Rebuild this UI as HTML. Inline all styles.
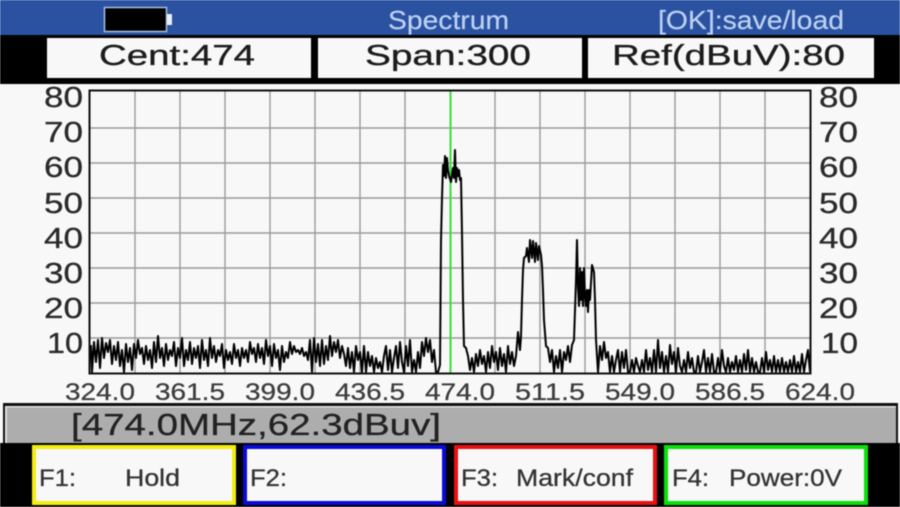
<!DOCTYPE html>
<html><head><meta charset="utf-8"><title>Spectrum</title>
<style>
html,body{margin:0;padding:0;width:900px;height:507px;overflow:hidden;background:#f8f8f8}
svg{display:block;filter:blur(.55px)}
text{font-family:"Liberation Sans",sans-serif}
.h{font-size:26px;fill:#bcd0f2;stroke:#bcd0f2;stroke-width:.2px}
.t{font-size:29px;fill:#1c1c1c;stroke:#1c1c1c;stroke-width:.35px}
.a{font-size:29px;fill:#2a2a2a;stroke:#2a2a2a;stroke-width:.3px}
.x{font-size:24px;fill:#3c3c3c;stroke:#3c3c3c;stroke-width:.25px}
.f{font-size:24px;fill:#333;stroke:#333;stroke-width:.3px}
</style></head><body>
<svg width="900" height="507" viewBox="0 0 900 507" xmlns="http://www.w3.org/2000/svg">
<rect width="900" height="507" fill="#f8f8f8"/>
<rect width="900" height="35" fill="#2a52a0"/>
<rect y="35" width="900" height="49" fill="#000"/>
<rect x="104.500" y="7.500" width="62" height="24" fill="#000" stroke="#a8bfe8" stroke-width="1.500"/>
<rect x="167" y="14" width="5" height="11" fill="#e8eefa"/>
<text class="h" x="388" y="29" textLength="121" lengthAdjust="spacingAndGlyphs">Spectrum</text>
<text class="h" x="658" y="29" textLength="186" lengthAdjust="spacingAndGlyphs">[OK]:save/load</text>
<rect x="47" y="38" width="264" height="40" fill="#f8f8f8"/>
<rect x="318" y="38" width="264" height="40" fill="#f8f8f8"/>
<rect x="588" y="38" width="286" height="40" fill="#f8f8f8"/>
<text class="t" x="99" y="65" textLength="156" lengthAdjust="spacingAndGlyphs">Cent:474</text>
<text class="t" x="365" y="65" textLength="166" lengthAdjust="spacingAndGlyphs">Span:300</text>
<text class="t" x="612" y="65" textLength="233" lengthAdjust="spacingAndGlyphs">Ref(dBuV):80</text>

<g stroke="#9a9a9a" stroke-width="1.400" fill="none">
<path d="M135 91V374M180 91V374M225 91V374M270 91V374M315 91V374M360 91V374M405 91V374M495 91V374M540 91V374M585 91V374M630 91V374M675 91V374M720 91V374M765 91V374"/>
<path d="M89 128H811M89 163H811M89 198H811M89 233H811M89 268H811M89 303H811M89 338H811"/>
</g>
<path d="M450.500 91V374" stroke="#38e038" stroke-width="2" fill="none"/>
<polyline fill="none" stroke="#000" stroke-width="2" stroke-linejoin="round" points="91,345 92,372 94,342 96,362 98,340 100,368 102,338 104,358 106,343 108,352 110,340 112,364 114,346 116,360 118,342 120,366 122,350 124,372 126,344 128,362 130,348 132,370 134,344 136,358 138,340 140,354 142,348 144,364 146,346 148,360 150,350 152,368 154,342 156,362 158,336 160,358 162,348 164,366 166,344 168,360 170,350 172,356 174,342 176,366 178,348 180,358 182,338 184,366 186,350 188,360 190,342 192,364 194,348 196,358 198,346 200,368 202,340 204,360 206,350 208,366 210,338 212,358 214,346 216,362 218,350 220,356 222,344 224,368 226,350 228,360 230,352 232,364 234,344 236,358 238,350 240,366 242,348 244,358 246,350 248,362 250,342 252,354 254,348 256,362 258,344 260,358 262,348 264,364 266,340 268,356 270,346 272,366 274,344 276,358 278,350 280,370 282,346 284,362 286,352 288,358 290,342 292,354 294,346 296,352 298,350 300,354 302,348 304,356 306,352 308,360 310,340 312,372 314,338 316,362 318,344 320,366 322,340 324,364 326,346 328,360 330,336 332,356 334,342 336,352 338,340 340,358 342,346 344,354 346,366 348,348 350,368 352,352 354,372 356,346 358,360 360,352 362,372 364,346 366,372 368,352 370,366 372,356 374,372 376,358 378,368 380,362 382,372 384,356 386,346 388,370 390,350 392,372 394,358 396,346 398,368 400,342 402,362 404,372 406,346 408,366 410,340 412,372 414,360 416,372 418,352 420,368 422,342 424,356 426,338 428,352 430,340 432,362 434,350 436,372 438,372 440,365 441,240 442,198 443,165 444,176 445,156 446,178 447,158 448,170 449,176 451,182 453,168 454,178 455,150 456,182 457,168 458,176 459,170 460,180 461,178 462,233 463,300 464,346 466,348 468,356 470,370 472,358 474,372 476,354 478,366 480,350 482,364 484,356 486,372 488,352 490,368 492,346 494,362 496,352 498,370 500,348 502,366 504,354 506,372 508,346 510,364 512,352 514,366 516,356 518,332 520,350 521,336 522,300 523,270 524,258 526,256 527,248 529,262 530,240 532,258 533,241 535,262 536,243 538,260 539,246 541,255 542,266 543,290 544,320 546,346 548,348 550,362 552,350 554,372 556,356 558,368 560,350 562,372 564,352 566,360 568,346 570,362 572,345 574,340 575,310 576,280 577,240 578,288 579,306 580,268 581,300 582,272 583,306 584,268 585,296 586,306 587,290 588,312 589,290 590,300 592,265 594,272 595,300 596,340 598,372 600,346 602,360 604,342 606,358 608,352 610,372 612,356 614,372 616,360 618,350 620,372 622,352 624,368 626,350 628,372 630,372 632,360 634,372 636,358 638,366 640,372 642,360 644,372 646,350 648,370 650,358 652,372 654,350 656,372 658,340 660,368 662,352 664,372 666,356 668,372 670,345 672,364 674,352 676,372 678,348 680,366 682,372 684,360 686,372 688,352 690,368 692,358 694,372 696,372 698,356 700,372 702,362 704,350 706,372 708,358 710,372 712,354 714,372 716,372 718,358 720,372 722,350 724,366 726,372 728,358 730,372 732,362 734,370 736,356 738,372 740,360 742,372 744,354 746,370 748,350 750,372 752,358 754,372 756,362 758,372 760,372 762,358 764,372 766,352 768,370 770,360 772,372 774,356 776,372 778,360 780,372 782,358 784,372 786,362 788,372 790,360 792,372 794,356 796,372 798,362 800,372 802,354 804,372 806,360 808,350 810,372"/>
<rect x="89.500" y="90.500" width="721" height="283" fill="none" stroke="#111" stroke-width="2"/>

<g>
<text class="a" x="44" y="107" textLength="39" lengthAdjust="spacingAndGlyphs">80</text>
<text class="a" x="44" y="142" textLength="39" lengthAdjust="spacingAndGlyphs">70</text>
<text class="a" x="44" y="177" textLength="39" lengthAdjust="spacingAndGlyphs">60</text>
<text class="a" x="44" y="213" textLength="39" lengthAdjust="spacingAndGlyphs">50</text>
<text class="a" x="44" y="248" textLength="39" lengthAdjust="spacingAndGlyphs">40</text>
<text class="a" x="44" y="283" textLength="39" lengthAdjust="spacingAndGlyphs">30</text>
<text class="a" x="44" y="318" textLength="39" lengthAdjust="spacingAndGlyphs">20</text>
<text class="a" x="47" y="353" textLength="36" lengthAdjust="spacingAndGlyphs">10</text>
<text class="a" x="819" y="107" textLength="39" lengthAdjust="spacingAndGlyphs">80</text>
<text class="a" x="819" y="142" textLength="39" lengthAdjust="spacingAndGlyphs">70</text>
<text class="a" x="819" y="177" textLength="39" lengthAdjust="spacingAndGlyphs">60</text>
<text class="a" x="819" y="213" textLength="39" lengthAdjust="spacingAndGlyphs">50</text>
<text class="a" x="819" y="248" textLength="39" lengthAdjust="spacingAndGlyphs">40</text>
<text class="a" x="819" y="283" textLength="39" lengthAdjust="spacingAndGlyphs">30</text>
<text class="a" x="819" y="318" textLength="39" lengthAdjust="spacingAndGlyphs">20</text>
<text class="a" x="821" y="353" textLength="37" lengthAdjust="spacingAndGlyphs">10</text>
</g>
<text class="x" x="65" y="400" textLength="70" lengthAdjust="spacingAndGlyphs">324.0</text>
<text class="x" x="155" y="400" textLength="70" lengthAdjust="spacingAndGlyphs">361.5</text>
<text class="x" x="245" y="400" textLength="70" lengthAdjust="spacingAndGlyphs">399.0</text>
<text class="x" x="335" y="400" textLength="70" lengthAdjust="spacingAndGlyphs">436.5</text>
<text class="x" x="425" y="400" textLength="70" lengthAdjust="spacingAndGlyphs">474.0</text>
<text class="x" x="515" y="400" textLength="70" lengthAdjust="spacingAndGlyphs">511.5</text>
<text class="x" x="605" y="400" textLength="70" lengthAdjust="spacingAndGlyphs">549.0</text>
<text class="x" x="695" y="400" textLength="70" lengthAdjust="spacingAndGlyphs">586.5</text>
<text class="x" x="785" y="400" textLength="70" lengthAdjust="spacingAndGlyphs">624.0</text>

<rect x="3" y="403" width="895" height="3" fill="#111"/>
<rect x="3" y="403" width="2" height="40" fill="#111"/>
<rect x="896" y="403" width="2" height="40" fill="#111"/>
<rect x="5" y="406" width="891" height="37" fill="#adadad"/>
<rect x="5" y="406" width="891" height="1.500" fill="#e2e2e2"/>
<rect x="5" y="406" width="2" height="37" fill="#e2e2e2"/>
<text x="71" y="435" font-size="31" fill="#222" stroke="#222" stroke-width=".3" textLength="370" lengthAdjust="spacingAndGlyphs">[474.0MHz,62.3dBuv]</text>

<rect y="443" width="900" height="64" fill="#000"/>
<rect x="34" y="447" width="200" height="56" fill="#f8f8f8" stroke="#f4ee10" stroke-width="4"/>
<rect x="245" y="447" width="199" height="56" fill="#f8f8f8" stroke="#0a0ad8" stroke-width="4"/>
<rect x="456" y="447" width="199" height="56" fill="#f8f8f8" stroke="#e81010" stroke-width="4"/>
<rect x="666" y="447" width="200" height="56" fill="#f8f8f8" stroke="#0ae00a" stroke-width="4"/>
<text class="f" x="39" y="486" textLength="37" lengthAdjust="spacingAndGlyphs">F1:</text>
<text class="f" x="125" y="486" textLength="55" lengthAdjust="spacingAndGlyphs">Hold</text>
<text class="f" x="250" y="486" textLength="37" lengthAdjust="spacingAndGlyphs">F2:</text>
<text class="f" x="461" y="486" textLength="37" lengthAdjust="spacingAndGlyphs">F3:</text>
<text class="f" x="516" y="486" textLength="117" lengthAdjust="spacingAndGlyphs">Mark/conf</text>
<text class="f" x="672" y="486" textLength="37" lengthAdjust="spacingAndGlyphs">F4:</text>
<text class="f" x="729" y="486" textLength="113" lengthAdjust="spacingAndGlyphs">Power:0V</text>
</svg>
</body></html>
